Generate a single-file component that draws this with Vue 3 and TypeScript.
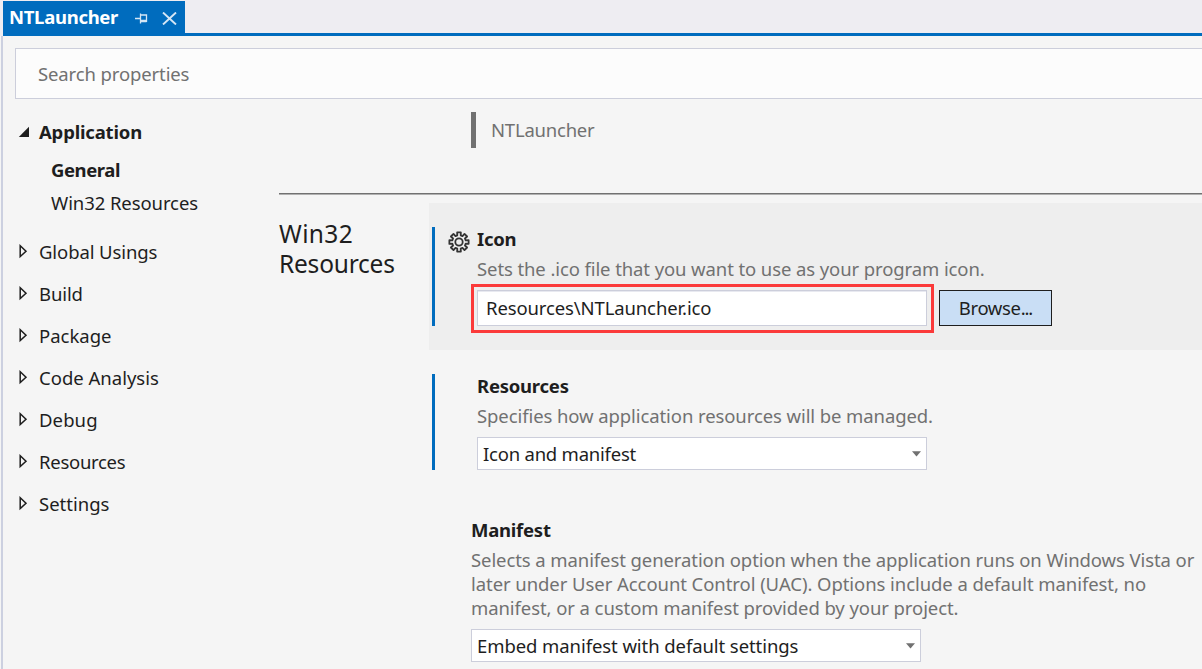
<script setup lang="ts">
interface TreeNode {
  label: string
  cls: string
}

const nodes: TreeNode[] = [
  { label: 'Global Usings', cls: 'usings' },
  { label: 'Build', cls: 'build' },
  { label: 'Package', cls: 'package' },
  { label: 'Code Analysis', cls: 'analysis' },
  { label: 'Debug', cls: 'debug' },
  { label: 'Resources', cls: 'resources' },
  { label: 'Settings', cls: 'settings' },
]

const manifestLines: string[] = [
  'Selects a manifest generation option when the application runs on Windows Vista or',
  'later under User Account Control (UAC). Options include a default manifest, no',
  'manifest, or a custom manifest provided by your project.',
]

// Outline of an eight-toothed gear centred on (11, 11).
function gearPath(): string {
  const points: string[] = []
  for (let i = 0; i < 8; i++) {
    const base = (i * Math.PI) / 4
    const corners: [number, number][] = [
      [6.9, -0.25],
      [9.8, -0.19],
      [9.8, 0.19],
      [6.9, 0.25],
    ]
    for (const [r, a] of corners) {
      points.push(`${(11 + r * Math.cos(base + a)).toFixed(2)} ${(11 + r * Math.sin(base + a)).toFixed(2)}`)
    }
  }
  return `M${points.join('L')}Z`
}
const gear = gearPath()
</script>

<template>
  <div class="window">
    <header class="tabs">
      <div class="tab">
        <span class="tab-title">NTLauncher</span>
        <svg class="pin" width="13" height="12" viewBox="0 0 13 12">
          <path d="M0 5.5H5M5.5 .5V10.5M5.5 2H11.5V9M5.5 7.5H11.5M5.5 8.5H11.5" fill="none" stroke="#d5e6f5" stroke-width="1.3" />
        </svg>
        <svg class="close" width="15" height="13" viewBox="0 0 15 13">
          <path d="M1 .5L14 12.5M14 .5L1 12.5" fill="none" stroke="#d5e6f5" stroke-width="1.9" />
        </svg>
      </div>
    </header>
    <div class="page">
      <div class="search"><span>Search properties</span></div>
      <div class="body">
        <nav class="tree">
          <div class="node app">
            <svg width="12" height="12" viewBox="0 0 12 12"><path d="M11 .8V11H.8Z" fill="#1e1e1e" /></svg>
            <span>Application</span>
          </div>
          <div class="child general"><span>General</span></div>
          <div class="child win32"><span>Win32 Resources</span></div>
          <div class="nodes">
            <div v-for="n in nodes" :key="n.label" class="node">
              <svg width="12" height="16" viewBox="0 0 12 16"><path d="M2.2 1.8V12.6L8 7.2Z" fill="none" stroke="#1e1e1e" stroke-width="1.5" /></svg>
              <span :class="n.cls">{{ n.label }}</span>
            </div>
          </div>
        </nav>
        <main class="content">
          <div class="assembly"><span>NTLauncher</span></div>
          <div class="rule"></div>
          <div class="section">
            <h2><span class="h-a">Win32</span><br /><span class="h-b">Resources</span></h2>
            <div class="props">
              <section class="prop icon-prop">
                <div class="bar"></div>
                <div class="gear">
                  <svg width="22" height="22" viewBox="0 0 22 22" fill="none" stroke="#333" stroke-width="1.8" stroke-linejoin="round">
                    <path :d="gear" />
                    <circle cx="11" cy="11" r="3.7" />
                  </svg>
                </div>
                <div class="fields">
                  <div class="title t-icon"><span>Icon</span></div>
                  <div class="desc d-icon"><span>Sets the .ico file that you want to use as your program icon.</span></div>
                  <div class="row">
                    <div class="highlight"><div class="input"><span>Resources\NTLauncher.ico</span></div></div>
                    <button class="browse">Browse<span class="dots">...</span></button>
                  </div>
                </div>
              </section>
              <section class="prop res-prop">
                <div class="bar"></div>
                <div class="gear"></div>
                <div class="fields">
                  <div class="title t-res"><span>Resources</span></div>
                  <div class="desc d-res"><span>Specifies how application resources will be managed.</span></div>
                  <div class="select">
                    <span class="s-res">Icon and manifest</span>
                    <svg width="9" height="6" viewBox="0 0 9 6"><path d="M0 .3H9L4.5 5.5Z" fill="#717171" /></svg>
                  </div>
                </div>
              </section>
              <section class="manifest">
                <div class="title t-man"><span>Manifest</span></div>
                <div class="desc"><div v-for="(l, i) in manifestLines" :key="i" :class="'m' + i"><span>{{ l }}</span></div></div>
                <div class="select">
                  <span class="s-man">Embed manifest with default settings</span>
                  <svg width="9" height="6" viewBox="0 0 9 6"><path d="M0 .3H9L4.5 5.5Z" fill="#717171" /></svg>
                </div>
              </section>
            </div>
          </div>
        </main>
      </div>
    </div>
  </div>
</template>

<style>
body {
  margin: 0;
  overflow: hidden;
  background: #f5f5f5;
}
</style>

<style scoped>
* {
  box-sizing: border-box;
}
.window {
  width: 1202px;
  height: 669px;
  overflow: hidden;
  background: #f5f5f5;
  color: #1e1e1e;
  font-family: 'Noto Sans', 'Open Sans', sans-serif;
  font-size: 18.5px;
  line-height: 24px;
  white-space: nowrap;
}
.tabs {
  height: 36px;
  padding: 1px 0 0 3px;
  background: linear-gradient(#006cbe, #006cbe) 3px 33px / 1199px 3px no-repeat #eeedf2;
}
.tab {
  display: flex;
  align-items: center;
  width: 182px;
  height: 35px;
  padding-left: 6px;
  background: #006cbe;
  color: #fff;
  font-weight: 700;
}
.tab-title {
  width: 126px;
  margin-top: -3px;
  letter-spacing: -0.3px;
}
.close {
  margin-left: 14px;
}
.page {
  height: 633px;
  margin-left: 1px;
  padding: 12px 0 0 12px;
  border-left: 2px solid #ccd0e0;
}
.search {
  width: 1200px;
  height: 51px;
  padding: 13px 22px;
  border: 1px solid #cccedb;
  background: #fcfcfc;
  color: #717171;
  letter-spacing: -0.12px;
}
.body {
  display: flex;
}
.tree {
  width: 264px;
  padding-top: 21px;
}
.node {
  display: flex;
  align-items: center;
  height: 24px;
  padding-left: 3px;
}
.node svg {
  width: 12px;
  margin-right: 9px;
}
.app,
.general {
  font-weight: 700;
}
.app {
  letter-spacing: -0.18px;
}
.child {
  padding-left: 36px;
}
.general {
  margin-top: 14px;
  letter-spacing: -0.43px;
}
.win32 {
  margin-top: 9px;
  letter-spacing: -0.08px;
}
.usings {
  letter-spacing: -0.1px;
}
.build {
  letter-spacing: -0.1px;
}
.debug {
  letter-spacing: 0.1px;
}
.resources {
  letter-spacing: -0.28px;
}
.nodes {
  display: grid;
  gap: 18px;
  margin-top: 25px;
}
.content {
  width: 923px;
  padding-top: 13px;
}
.assembly {
  height: 36px;
  margin-left: 192px;
  padding: 6px 0 0 15px;
  border-left: 5px solid #717171;
  color: #717171;
  letter-spacing: -0.22px;
}
.rule {
  height: 2px;
  margin-top: 45px;
  border-top: 1px solid #717171;
  background: #b0b0b0;
}
.section {
  display: flex;
  margin-top: 8px;
}
h2 {
  width: 150px;
  margin: 16px 0 0;
  font-size: 24.5px;
  font-weight: 400;
  line-height: 30px;
}
.h-a {
  letter-spacing: 0.35px;
}
.h-b {
  letter-spacing: -0.22px;
}
.props {
  width: 773px;
}
.prop {
  display: flex;
  padding-left: 3px;
}
.icon-prop {
  height: 147px;
  padding-top: 24px;
  background: #eee;
}
.bar {
  width: 3px;
  height: 99px;
  background: #006cbe;
}
.gear {
  width: 42px;
  padding: 4px 0 0 13px;
}
.title {
  font-weight: 700;
  letter-spacing: -0.24px;
}
.desc {
  color: #717171;
}
.d-icon,
.d-res {
  margin-top: 6px;
}
.d-icon {
  letter-spacing: -0.1px;
}
.d-res {
  letter-spacing: -0.09px;
}
.m0 {
  letter-spacing: -0.09px;
}
.m1 {
  letter-spacing: -0.065px;
}
.m2 {
  letter-spacing: -0.08px;
}
.s-res {
  letter-spacing: -0.22px;
}
.s-man {
  letter-spacing: -0.08px;
}
.row {
  display: flex;
  margin: 3px 0 0 -6px;
}
.highlight {
  width: 463px;
  height: 49px;
  padding: 3px;
  border: 3px solid #fb3a3a;
}
.input {
  width: 450px;
  height: 36px;
  padding: 5px 8px;
  border: 1px solid #cccedb;
  box-shadow: inset 0 1px #e8e9f0;
  background: #fff;
  letter-spacing: -0.12px;
}
.browse {
  width: 113px;
  height: 36px;
  margin: 6px 0 0 5px;
  padding: 0;
  border: 1px solid #1e1e1e;
  background: #c9def5;
  color: #1e1e1e;
  font: inherit;
  letter-spacing: -0.35px;
}
.dots {
  letter-spacing: -1.1px;
}
.res-prop {
  margin-top: 24px;
}
.res-prop .bar {
  height: 96px;
}
.select {
  display: flex;
  align-items: center;
  justify-content: space-between;
  width: 450px;
  height: 33px;
  padding: 0 5px;
  border: 1px solid #cccedb;
  background: #fff;
}
.res-prop .select {
  margin-top: 9px;
}
.manifest {
  margin: 48px 0 0 42px;
}
.manifest .desc {
  margin-top: 6px;
}
.manifest .select {
  margin-top: 9px;
}
</style>
